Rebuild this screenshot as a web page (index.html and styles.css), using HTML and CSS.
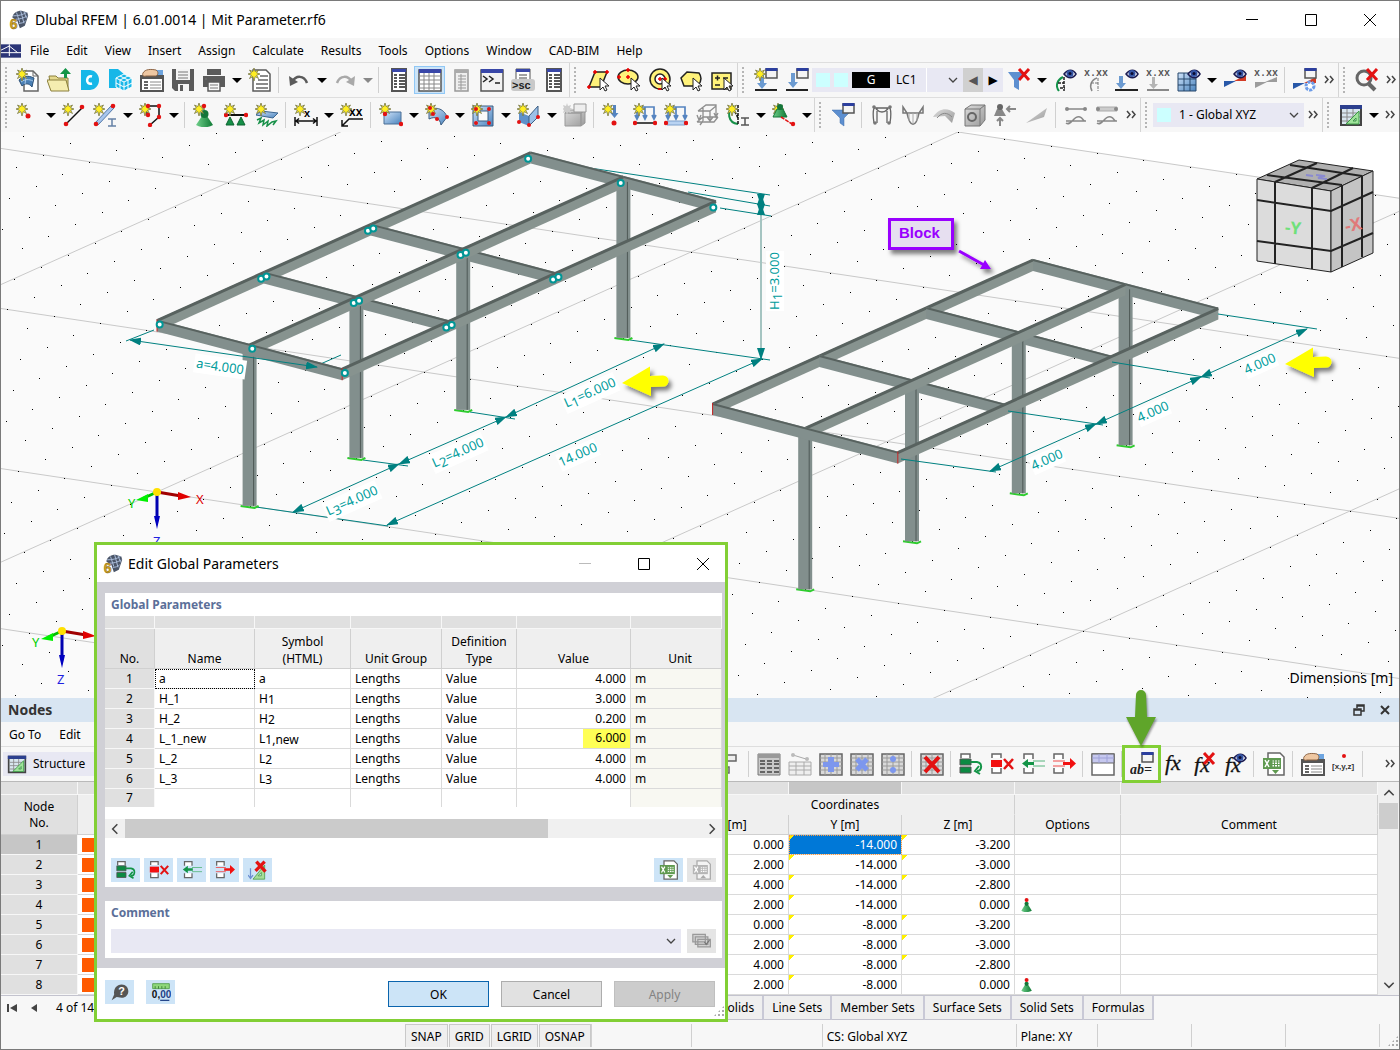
FILE: index.html
```
<!DOCTYPE html>
<html lang="en">
<head>
  <meta charset="UTF-8">
  <meta name="viewport" content="width=device-width, initial-scale=1.0">
  <title>Dlubal RFEM | 6.01.0014 | Mit Parameter.rf6</title>
  <link rel="stylesheet" href="styles.css">
</head>
<body>
  <svg class="gradients" aria-hidden="true">
    <defs>
      <linearGradient id="blue" x1="0" y1="0" x2="1" y2="1"><stop offset="0" stop-color="#cfe3fa"/><stop offset="1" stop-color="#4b84bd"/></linearGradient>
      <linearGradient id="grey" x1="0" y1="0" x2="1" y2="1"><stop offset="0" stop-color="#dcdcdc"/><stop offset="1" stop-color="#9a9a9a"/></linearGradient>
      <linearGradient id="green" x1="0" y1="0" x2="1" y2="0"><stop offset="0" stop-color="#6fcf8a"/><stop offset="1" stop-color="#0f7a35"/></linearGradient>
    </defs>
  </svg>

  <!-- icon set -->
  <svg class="icon-set" aria-hidden="true">
    <symbol id="star" viewBox="0 0 24 24"><path d="M6 0l1.200 3.600L10.500 2 8.600 5 12 6 8.600 7.200 10.500 10.500 7.200 8.600 6 13 4.800 8.600 1.500 10.500 3.400 7.200 0 6l3.400-1L1.500 2l3.300 1.600z" fill="#ffee22" stroke="#77774a" stroke-width=".8"/></symbol>
    <symbol id="win" viewBox="0 0 24 24"><path d="M12 1h11v9H12z" fill="#f4f4f4" stroke="#555" stroke-width="1.500"/><path d="M11.500 0h12v3h-12z" fill="#2c3f9e"/></symbol>
    <symbol id="eye" viewBox="0 0 24 24"><path d="M11 6c4-5 9-5 12 0-3 5-8 5-12 0z" fill="#fff" stroke="#1b1b50" stroke-width="1.500"/><circle cx="17" cy="5.500" r="3.500" fill="#3555a5"/><circle cx="17" cy="5.500" r="1.500" fill="#0b0b30"/></symbol>
    <symbol id="cross" viewBox="0 0 24 24"><path d="M12 1l10 11M22 1L12 12" stroke="#e31212" stroke-width="3"/></symbol>
    <symbol id="cursor" viewBox="0 0 24 24"><path d="M14 10v12l3-3 2 4 2-1-2-4h4z" fill="#fff" stroke="#222"/></symbol>
    <symbol id="cone" viewBox="0 0 24 24"><path d="M9 13h5l6 9c-5 3-12 3-17 0z" fill="url(#green)"/><circle cx="11.500" cy="11" r="4" fill="#14763a"/></symbol>
    <symbol id="xxx" viewBox="0 0 24 24"><text x="0" y="8" font-family="Liberation Mono" font-weight="bold" font-size="10" fill="#555">x.xx</text></symbol>

    <symbol id="i-app" viewBox="0 0 24 24"><path d="M4 9C5 4 9 1 15 1l7 2 1 4-4 12-6 3-3-9z" fill="#4a5568"/><path d="M5 7c6 0 11-1 16-4M8 11c5 0 9-1 14-4M12 16c3 0 6-1 8-3M9 3l4 12M14 1l4 15M18 2l3 8" stroke="#a9bbd8" stroke-width="1.200" fill="none"/><text x="1" y="23" font-family="Liberation Sans" font-weight="bold" font-size="17" fill="#d2a422" stroke="#7a5d10" stroke-width=".5">6</text></symbol>
    <symbol id="i-doc" viewBox="0 0 24 24"><path d="M0 4h24v16H0z" fill="#2b3577"/><path d="M0 14h24M0 11l10-5 10 8M10 4v14" stroke="#fff" stroke-width="1.200" fill="none"/></symbol>
    <symbol id="i-new" viewBox="0 0 24 24"><path d="M8 3h9l5 5v15H8z" fill="#fff" stroke="#666" stroke-width="1.500"/><path d="M17 3v5h5" fill="none" stroke="#666"/><path d="M3 12c4-4 9-5 15-2l-2 9c-3-4-7-4-10-1z" fill="#4b80b5" stroke="#2b5077"/><path d="M5 14c4-3 8-3 12-1M10 9l-1 7" fill="none" stroke="#a9c9e8"/><use href="#star"/></symbol>
    <symbol id="i-open" viewBox="0 0 24 24"><path d="M2 8h7l2 2h10v12H4z" fill="#e5d98e" stroke="#8a7f3c"/><path d="M0 12h19l3 11H4z" fill="#f5edb0" stroke="#8a7f3c"/><path d="M17 10V6h-4l5.500-6L24 6h-4v4z" fill="#139447"/></symbol>
    <symbol id="i-d" viewBox="0 0 24 24"><path d="M3 2h9c12 1 12 19 0 20H3z" fill="#17b7e8"/><path d="M14 8.500c-6-2-7 9 0 7" fill="none" stroke="#fff" stroke-width="2.500"/></symbol>
    <symbol id="i-cloud" viewBox="0 0 24 24"><path d="M0 1h9l7 6-4 13H0z" fill="#17b7e8"/><path d="M15 6l8 4v9l-8 4-8-4v-9z" fill="#17b7e8" stroke="#fff"/><path d="M7 10l8 4 8-4M15 14v9M11 8l8 4v9M19 8l-8 4v9M7 15l8 4 8-4" fill="none" stroke="#fff"/></symbol>
    <symbol id="i-hand" viewBox="0 0 24 24"><path d="M1 8h22v15H1z" fill="#fff" stroke="#555" stroke-width="2"/><path d="M1 7h22v4H1z" fill="#555"/><path d="M14 2h9v5h-9z" fill="#6ea5e0"/><path d="M3 5c2-4 8-4 13-3 3 2 2 5 0 6H6C3 9 2 7 3 5z" fill="#eec7a2" stroke="#8e6545"/><path d="M4 14h4M4 17h4M4 20h4" stroke="#333" stroke-width="1.500"/><path d="M10 14h11M10 17h11M10 20h11" stroke="#888"/></symbol>
    <symbol id="i-save" viewBox="0 0 24 24"><path d="M1 1h22v22H4l-3-3z" fill="#5b5b5b"/><path d="M5 1h14v11H5zM7 16h11v7H7z" fill="#f4f4f4"/><path d="M7 4h10M7 7h10M7 10h10" stroke="#777"/><path d="M9 17h3v6H9z" fill="#5b5b5b"/></symbol>
    <symbol id="i-print" viewBox="0 0 24 24"><path d="M5 1h14v6H5zM1 8h22v11H1z" fill="#5b5b5b"/><path d="M6 14h12v9H6z" fill="#f8f8f8" stroke="#5b5b5b" stroke-width="1.500"/><path d="M8 17h8M8 20h8M3 11h2" stroke="#777"/></symbol>
    <symbol id="i-report" viewBox="0 0 24 24"><path d="M5 2h13l4 4v17H5z" fill="#fff" stroke="#5b5b5b" stroke-width="1.500"/><path d="M12 8h8M10 12h10M8 16h12M8 20h12" stroke="#666" stroke-width="1.500"/><use href="#star"/></symbol>
    <symbol id="i-undo" viewBox="0 0 24 24"><path d="M5 14C9 7 17 7 20 15" fill="none" stroke="#5b5b5b" stroke-width="2.500"/><path d="M2 8l1 10 8-4z" fill="#5b5b5b"/></symbol>
    <symbol id="i-redo" viewBox="0 0 24 24"><path d="M4 15C7 7 15 7 19 14" fill="none" stroke="#a9a9a9" stroke-width="2.500"/><path d="M22 8l-1 10-8-4z" fill="#a9a9a9"/></symbol>
    <symbol id="i-list" viewBox="0 0 24 24"><path d="M5 1h14v22H5z" fill="#fff" stroke="#555" stroke-width="2"/><path d="M5 1h14v3H5z" fill="#3947a8"/><path d="M7 7h3M7 10h3M7 13h3M7 16h3M7 19h3M12 7h6M12 10h6M12 13h6M12 16h6M12 19h6" stroke="#222" stroke-width="1.500"/></symbol>
    <symbol id="i-grid" viewBox="0 0 24 24"><path d="M1 2h22v21H1z" fill="#fff" stroke="#555" stroke-width="1.500"/><path d="M1 1h22v4H1z" fill="#3947a8"/><path d="M1 8h22M1 12h22M1 16h22M1 20h22M6 5v18M11 5v18M16 5v18" stroke="#888"/></symbol>
    <symbol id="i-page" viewBox="0 0 24 24"><path d="M6 2h13v21H6z" fill="#eee" stroke="#999" stroke-width="1.500"/><path d="M6 2h13v3H6z" fill="#aaa"/><path d="M9 8h8M9 11h8M9 14h8M9 17h8M9 20h8M12 6v16" stroke="#999"/></symbol>
    <symbol id="i-console" viewBox="0 0 24 24"><path d="M1 2h22v21H1z" fill="#f2f2f2" stroke="#555" stroke-width="1.500"/><path d="M1 1h22v4H1z" fill="#3947a8"/><path d="M3 8l4 3-4 3M9 8l4 3-4 3M15 15h5" fill="none" stroke="#222" stroke-width="1.500"/></symbol>
    <symbol id="i-sc" viewBox="0 0 24 24"><path d="M5 1h14v18H5z" fill="#fff" stroke="#555"/><path d="M5 1h14v3H5z" fill="#3947a8"/><path d="M8 7h8M8 10h8" stroke="#444"/><rect x="0" y="11" width="24" height="12" rx="3" fill="#c9c9c9"/><text x="1" y="21" font-family="Liberation Sans" font-weight="bold" font-size="11" fill="#222">&gt;sc</text></symbol>
    <symbol id="i-area1" viewBox="0 0 24 24"><path d="M9 4h12l-6 15H3z" fill="#fff27a" stroke="#222" stroke-width="1.500"/><path d="M7 4h4M9 2v4M19 4h4M21 2v4M1 19h4M3 17v4" stroke="#e00" stroke-width="1.500"/><use href="#cursor"/></symbol>
    <symbol id="i-area2" viewBox="0 0 24 24"><ellipse cx="11" cy="9" rx="10" ry="7" fill="#fff27a" stroke="#222" stroke-width="1.500"/><path d="M9 2h4M11 0v4M0 9h4M2 7v4M9 9h4M11 7v4" stroke="#e00" stroke-width="1.500"/><use href="#cursor"/></symbol>
    <symbol id="i-area3" viewBox="0 0 24 24"><circle cx="12" cy="11" r="10" fill="#fff27a" stroke="#222" stroke-width="1.500"/><circle cx="12" cy="11" r="5" fill="#fff" stroke="#222" stroke-width="1.500"/><path d="M10 11h4M12 9v4M15 11h4M17 9v4M10 21h4" stroke="#e00" stroke-width="1.500"/><use href="#cursor"/></symbol>
    <symbol id="i-area4" viewBox="0 0 24 24"><path d="M2 10l6-6 12 1c3 4 2 9-1 13L5 18z" fill="#fff27a" stroke="#222" stroke-width="1.500"/><use href="#cursor"/></symbol>
    <symbol id="i-area5" viewBox="0 0 24 24"><path d="M2 5h19v16H2z" fill="#fff27a" stroke="#222" stroke-width="1.500"/><path d="M5 10h5M7.500 7.500v5M5 17h5M13 10h5" stroke="#222" stroke-width="1.500"/><use href="#cursor"/></symbol>
    <symbol id="i-loadnew" viewBox="0 0 24 24"><use href="#win"/><path d="M6 7h4v8h3l-5 6-5-6h3z" fill="#6b9ad0"/><path d="M1 22h22" stroke="#222" stroke-width="2"/><use href="#star"/></symbol>
    <symbol id="i-load" viewBox="0 0 24 24"><use href="#win"/><path d="M6 5h4v9h3l-5 6-5-6h3z" fill="#6b9ad0"/><path d="M1 22h22" stroke="#222" stroke-width="2"/></symbol>
    <symbol id="i-nofilter" viewBox="0 0 24 24"><path d="M1 4h18l-7 8v10l-5-3v-7z" fill="#5d8fd0"/><use href="#cross"/></symbol>
    <symbol id="i-filter" viewBox="0 0 24 24"><path d="M1 7h20l-8 8v8l-4-3v-5z" fill="#5d8fd0" stroke="#3d6cab" stroke-width=".5"/><use href="#win"/></symbol>
    <symbol id="i-vmodel" viewBox="0 0 24 24"><path d="M6 23C2 18 4 12 10 9" fill="none" stroke="#14934a" stroke-width="2"/><path d="M11 9v14M5 15h6M7 20h5" stroke="#222" stroke-dasharray="3 1" stroke-width="1.500"/><use href="#eye"/></symbol>
    <symbol id="i-vval" viewBox="0 0 24 24"><path d="M8 23c-3-5-1-11 5-13" fill="none" stroke="#888" stroke-width="1.500"/><path d="M14 10v13M7 15h7" stroke="#777" stroke-dasharray="3 1"/><use href="#xxx"/></symbol>
    <symbol id="i-vload" viewBox="0 0 24 24"><path d="M4 8h4v7h3l-5 6-5-6h3z" fill="#6b9ad0"/><path d="M0 22h23" stroke="#222" stroke-width="2"/><use href="#eye"/></symbol>
    <symbol id="i-vloadx" viewBox="0 0 24 24"><path d="M6 9h3v7h3l-4.500 5L3 16h3z" fill="#b5b5b5"/><path d="M1 22h22" stroke="#888" stroke-width="2"/><use href="#xxx"/></symbol>
    <symbol id="i-vgrid" viewBox="0 0 24 24"><path d="M1 5h18v18H1z" fill="url(#blue)" stroke="#27476b"/><path d="M7 5v18M13 5v18M1 11h18M1 17h18" stroke="#27476b"/><use href="#eye"/></symbol>
    <symbol id="i-vres" viewBox="0 0 24 24"><path d="M1 13h12L1 19z" fill="#2858a8"/><path d="M11 13l12-6v6z" fill="#d33b24"/><use href="#eye"/></symbol>
    <symbol id="i-vresx" viewBox="0 0 24 24"><path d="M1 14h12L1 20zM11 14l12-5v5z" fill="#9c9c9c"/><use href="#xxx"/></symbol>
    <symbol id="i-vset" viewBox="0 0 24 24"><path d="M0 15h12L0 21z" fill="#2858a8"/><path d="M11 15l12-6v6z" fill="#d33b24"/><use href="#win"/><circle cx="17" cy="18" r="4" fill="#fff" stroke="#6b9be8" stroke-width="3" stroke-dasharray="3 1"/></symbol>
    <symbol id="i-find" viewBox="0 0 24 24"><circle cx="9" cy="10" r="7" fill="none" stroke="#666" stroke-width="3"/><path d="M14 16l6 6" stroke="#666" stroke-width="4"/><use href="#cross"/></symbol>

    <symbol id="i-node" viewBox="0 0 24 24"><use href="#star"/><circle cx="12" cy="13" r="2.500" fill="#e31212"/></symbol>
    <symbol id="i-line" viewBox="0 0 24 24"><path d="M5 20L21 4" stroke="#111" stroke-width="1.500"/><circle cx="4" cy="21" r="2.300" fill="#e31212"/><circle cx="20" cy="4" r="2.300" fill="#e31212"/><use href="#star"/></symbol>
    <symbol id="i-member" viewBox="0 0 24 24"><path d="M2 20L18 3l3 2L5 22z" fill="#a8c6ee" stroke="#5479a8"/><circle cx="3" cy="21" r="2.300" fill="#e31212"/><circle cx="20" cy="3" r="2.300" fill="#e31212"/><path d="M15 16h8M15 23h8M19 16v7" stroke="#6581a6" stroke-width="1.500"/><use href="#star"/></symbol>
    <symbol id="i-poly" viewBox="0 0 24 24"><path d="M8 3h12v11l-9 8M8 3v9" stroke="#111" stroke-width="1.500" fill="none"/><use href="#star"/><circle cx="9" cy="3" r="2.200" fill="#e31212"/><circle cx="20" cy="3" r="2.200" fill="#e31212"/><circle cx="9" cy="12" r="2.200" fill="#e31212"/><circle cx="20" cy="14" r="2.200" fill="#e31212"/><circle cx="11" cy="22" r="2.200" fill="#e31212"/></symbol>
    <symbol id="i-support" viewBox="0 0 24 24"><use href="#cone"/><use href="#star"/><circle cx="11" cy="3" r="2.200" fill="#e31212"/></symbol>
    <symbol id="i-lsupport" viewBox="0 0 24 24"><path d="M3 12h18" stroke="#111" stroke-width="2"/><path d="M2 22l4-8 4 8zM13 22l4-8 4 8z" fill="#169048" stroke="#0d6430"/><circle cx="2" cy="12" r="2.200" fill="#e31212"/><circle cx="22" cy="12" r="2.200" fill="#e31212"/><use href="#star"/></symbol>
    <symbol id="i-ssupport" viewBox="0 0 24 24"><path d="M1 12l5-4 17 2-5 5z" fill="url(#blue)" stroke="#3b6690"/><path d="M2 17l4-2-2 5 5-3-1 5 5-4-1 5 5-4 4-1-3 4" fill="none" stroke="#169048" stroke-width="1.500"/><use href="#star"/></symbol>
    <symbol id="i-dim" viewBox="0 0 24 24"><path d="M1 14v9M23 14v9M2 18h20M5 15.500L2 18l3 2.500M19 15.500l3 2.500-3 2.500" fill="none" stroke="#111" stroke-width="1.500"/><text x="10" y="14" font-family="Liberation Sans" font-weight="bold" font-size="11">x</text><use href="#star"/></symbol>
    <symbol id="i-dim2" viewBox="0 0 24 24"><path d="M23 16H9l-7 7M2 17v6h6" fill="none" stroke="#111" stroke-width="1.500"/><text x="9" y="13" font-family="Liberation Sans" font-weight="bold" font-size="12">xx</text><use href="#star"/></symbol>
    <symbol id="i-surf" viewBox="0 0 24 24"><path d="M5 9h17v12H5z" fill="url(#blue)" stroke="#4a6f96"/><use href="#star"/><circle cx="6" cy="11" r="2.200" fill="#e31212"/><circle cx="22" cy="21" r="2.200" fill="#e31212"/></symbol>
    <symbol id="i-curved" viewBox="0 0 24 24"><path d="M4 8c7-6 16-1 18 6l-6 8c-1-7-6-9-12-6z" fill="url(#blue)" stroke="#3b5d82"/><use href="#star"/><circle cx="5" cy="5" r="2" fill="#e31212"/><circle cx="22" cy="14" r="2" fill="#e31212"/><circle cx="12" cy="16" r="2" fill="#e31212"/><circle cx="8" cy="11" r="2" fill="#e31212"/></symbol>
    <symbol id="i-opening" viewBox="0 0 24 24"><path d="M2 3h20v20H2z" fill="url(#blue)" stroke="#3b5d82"/><path d="M7 8h10v10H7z" fill="#fafafa" stroke="#3b5d82"/><use href="#star"/><circle cx="5" cy="6" r="2" fill="#e31212"/><circle cx="18" cy="6" r="2" fill="#e31212"/><circle cx="5" cy="20" r="2" fill="#e31212"/><circle cx="18" cy="20" r="2" fill="#e31212"/></symbol>
    <symbol id="i-solid" viewBox="0 0 24 24"><path d="M2 9l10 4v10L2 19z" fill="#5f91ca"/><path d="M12 13l9-10v11l-9 9z" fill="#9cc0e8" stroke="#3b5d82"/><use href="#star"/><circle cx="2" cy="19" r="2" fill="#e31212"/><circle cx="12" cy="22" r="2" fill="#e31212"/><circle cx="21" cy="14" r="2" fill="#e31212"/></symbol>
    <symbol id="i-box" viewBox="0 0 24 24"><path d="M2 10l4-3h16l-4 3zM2 10h16v13H2zM18 10l4-3v13l-4 3z" fill="url(#grey)" stroke="#999"/><path d="M11 1h12v8H11z" fill="#eee" stroke="#999"/><path d="M4 0l1 3 3-1-1 3 3 1-3 1 1 3-3-1-1 3-1-3-3 1 1-3-2-1 2-1-1-3 3 1z" fill="#ccc"/></symbol>
    <symbol id="i-nload" viewBox="0 0 24 24"><path d="M11 2h3v8h2.500l-4 5-4-5H11z" fill="#5584c0"/><circle cx="12" cy="20" r="2.500" fill="#e31212"/><use href="#star"/></symbol>
    <symbol id="i-mload" viewBox="0 0 24 24"><path d="M4 7V4h17v11M12 4v11M4 7v8M2 12l2 4 2-4M10 12l2 4 2-4M19 12l2 4 2-4" fill="none" stroke="#5584c0" stroke-width="1.700"/><path d="M3 20h18" stroke="#111" stroke-width="1.500"/><circle cx="2" cy="20" r="2.200" fill="#e31212"/><circle cx="22" cy="20" r="2.200" fill="#e31212"/><use href="#star"/></symbol>
    <symbol id="i-sload" viewBox="0 0 24 24"><path d="M4 7V4h17v11M12 4v11M4 7v8M2 12l2 4 2-4M10 12l2 4 2-4M19 12l2 4 2-4" fill="none" stroke="#5584c0" stroke-width="1.700"/><path d="M3 18h18v4H3z" fill="#b9d3f2" stroke="#7ca0cc"/><circle cx="2" cy="20" r="2.200" fill="#e31212"/><circle cx="22" cy="20" r="2.200" fill="#e31212"/><use href="#star"/></symbol>
    <symbol id="i-gload" viewBox="0 0 24 24"><path d="M3 8l8-6h10v10M3 8h12v10M8 4v14M21 3l-6 5M2 19h17l4-5M2 12l2 5 2-5M12 14l3 4 3-4M19 10l2 4 2-4M8 18l-3 4M2 19l6-5h15" fill="none" stroke="#8e8e8e" stroke-width="1.300"/></symbol>
    <symbol id="i-imp" viewBox="0 0 24 24"><path d="M8 3C0 8 2 20 12 21" fill="none" stroke="#169048" stroke-width="2"/><path d="M12 2v20M7 5l5 10" stroke="#111" stroke-width="1.500" stroke-dasharray="3 1"/><path d="M15 15h8M15 22h8M19 15v7" stroke="#555" stroke-width="1.500"/><use href="#star"/></symbol>
    <symbol id="i-displ" viewBox="0 0 24 24"><use href="#star"/><path d="M5 6h6l4 8H1z" fill="url(#green)" stroke="#14763a"/><circle cx="8" cy="4" r="3" fill="#14763a"/><path d="M9 14l11 7" stroke="#e31212" stroke-width="1.500" stroke-dasharray="4 1"/><circle cx="21" cy="21" r="2.200" fill="#e31212"/></symbol>
    <symbol id="i-r1" viewBox="0 0 24 24"><path d="M4 20C3 14 3 8 4 5h16c1 3 1 9 0 15M6 6c4 4 8 4 12 0M7 5v15M17 5v15" fill="none" stroke="#666" stroke-width="1.300"/><circle cx="4" cy="4" r="1.800" fill="#777"/><circle cx="20" cy="4" r="1.800" fill="#777"/><circle cx="5" cy="20" r="1.800" fill="#777"/><circle cx="19" cy="20" r="1.800" fill="#777"/></symbol>
    <symbol id="i-r2" viewBox="0 0 24 24"><path d="M2 4l4 6c3 15 9 15 12 0l4-6v6H2z" fill="none" stroke="#777" stroke-width="1.500"/><path d="M8 10v8M12 10v11M16 10v8" stroke="#aaa"/></symbol>
    <symbol id="i-r3" viewBox="0 0 24 24"><path d="M1 14C8 4 16 5 23 10l-3 10-7-7z" fill="url(#grey)"/><path d="M5 15c5-6 10-6 15-1" fill="none" stroke="#888"/></symbol>
    <symbol id="i-r4" viewBox="0 0 24 24"><path d="M2 6l6-4h14v15l-5 6H2z" fill="url(#grey)" stroke="#777"/><path d="M2 6h15v17M17 6l5-4" fill="none" stroke="#777"/><circle cx="9" cy="14" r="4" fill="none" stroke="#666" stroke-width="2"/></symbol>
    <symbol id="i-r5" viewBox="0 0 24 24"><path d="M3 6h5l4 7H0z" fill="#888"/><circle cx="6" cy="4" r="3" fill="#666"/><path d="M6 15v8M3 18l3-3 3 3M13 6h9M16 3l-3 3 3 3" fill="none" stroke="#888" stroke-width="2"/></symbol>
    <symbol id="i-r6" viewBox="0 0 24 24"><path d="M1 20L22 5l-3 9z" fill="url(#grey)"/></symbol>
    <symbol id="i-r7" viewBox="0 0 24 24"><path d="M2 6h20M2 18h20M2 20c5 4 8-9 14-6 3 1 3 4 5 4" fill="none" stroke="#888" stroke-width="1.500"/><circle cx="3" cy="6" r="2" fill="#888"/><circle cx="21" cy="6" r="2" fill="#888"/></symbol>
    <symbol id="i-r8" viewBox="0 0 24 24"><path d="M2 4h20v4H2z" fill="#ccc" stroke="#aaa"/><path d="M2 18h20M2 20c5 4 8-9 14-6 3 1 3 4 5 4" fill="none" stroke="#888" stroke-width="1.500"/><circle cx="3" cy="6" r="2" fill="#888"/><circle cx="21" cy="6" r="2" fill="#888"/></symbol>
    <symbol id="i-table" viewBox="0 0 24 24"><path d="M2 3h20v19H2z" fill="#d9e6ee" stroke="#444" stroke-width="2"/><path d="M1 2h22v4H1z" fill="#2c3f8e"/><path d="M3 10h18M3 14h18M3 18h18M8 6v15M14 6v15" stroke="#888"/><path d="M20 8v13H7zM17 15v3h-3z" fill="#9fe39a" stroke="#3c9a46" fill-rule="evenodd"/></symbol>
    <symbol id="i-more" viewBox="0 0 12 12"><path d="M2 2l3 3.500L2 9M7 2l3 3.500L7 9" fill="none" stroke="#444" stroke-width="1.500"/></symbol>

    <symbol id="i-rows" viewBox="0 0 24 24"><path d="M1 2h22v21H1z" fill="#c9c9c9" stroke="#777"/><path d="M1 4h22" stroke="#999" stroke-width="4"/><path d="M3 9h5M10 9h5M17 9h5M3 12h5M10 12h5M17 12h5M3 16h5M10 16h5M17 16h5M3 20h5M10 20h5M17 20h5" stroke="#444" stroke-width="1.500"/></symbol>
    <symbol id="i-rows2" viewBox="0 0 24 24"><path d="M1 10h22v13H1z" fill="#eee" stroke="#aaa"/><path d="M1 14h22M1 18h22M8 10v13M16 10v13M5 3l13 4" stroke="#aaa"/><circle cx="5" cy="3" r="2" fill="#bbb"/><circle cx="19" cy="7" r="2" fill="#bbb"/></symbol>
    <symbol id="cells" viewBox="0 0 24 24"><path d="M1 2h22v21H1z" fill="#d9d9d9" stroke="#666" stroke-width="1.500"/><path d="M1 6h22M1 10h22M1 14h22M1 18h22M6 2v21M12 2v21M18 2v21" stroke="#999"/></symbol>
    <symbol id="i-plus" viewBox="0 0 24 24"><use href="#cells"/><path d="M9 5h6v5h5v5h-5v5H9v-5H4v-5h5z" fill="#7d97ee"/></symbol>
    <symbol id="i-times" viewBox="0 0 24 24"><use href="#cells"/><path d="M7 7l10 11M17 7L7 18" stroke="#7d97ee" stroke-width="5"/></symbol>
    <symbol id="i-divide" viewBox="0 0 24 24"><use href="#cells"/><circle cx="12" cy="7" r="3" fill="#7d97ee"/><circle cx="12" cy="18" r="3" fill="#7d97ee"/></symbol>
    <symbol id="i-clear" viewBox="0 0 24 24"><use href="#cells"/><path d="M5 5l14 15M19 5L5 20" stroke="#e31212" stroke-width="4"/></symbol>
    <symbol id="i-ins" viewBox="0 0 24 24"><path d="M2 6V2h9v4" fill="#fff" stroke="#666" stroke-width="1.500"/><path d="M1 7h11v6H1zM1 15h11v6H1z" fill="#0c8a43" stroke="#555"/><path d="M12 10h6c6 1 5 9 0 9M20 14l-4 5 5 3" fill="none" stroke="#139447" stroke-width="2"/></symbol>
    <symbol id="i-del" viewBox="0 0 24 24"><path d="M2 6V2h9v4M2 16v5h9v-5" fill="#fff" stroke="#666" stroke-width="1.500"/><path d="M1 8h11v7H1z" fill="#f21010"/><path d="M14 7l9 10M23 7l-9 10" stroke="#e31212" stroke-width="2.500"/></symbol>
    <symbol id="i-left" viewBox="0 0 24 24"><path d="M3 7V2h9v5M3 16v5h9v-5" fill="#fff" stroke="#666" stroke-width="1.500"/><path d="M24 9H12M24 14H12" stroke="#56b47c"/><path d="M13 10H7V7l-6 4.500L7 16v-3h6z" fill="#139447"/></symbol>
    <symbol id="i-right" viewBox="0 0 24 24"><path d="M2 7V2h9v5M2 16v5h9v-5" fill="#fff" stroke="#666" stroke-width="1.500"/><path d="M1 9h12M1 14h12" stroke="#f04848"/><path d="M11 10h7V6l6 5.500-6 5.500v-4h-7z" fill="#f21010"/></symbol>
    <symbol id="i-sortx" viewBox="0 0 24 24"><path d="M3 10v11M0 18l3 4 3-4" fill="none" stroke="#6b8ed0" stroke-width="1.500"/><path d="M20 6v17H6zM16 15v4h-4z" fill="#a6dd98" stroke="#4ea04c" fill-rule="evenodd"/><path d="M10 2l11 12M20 2L9 13" stroke="#e31212" stroke-width="4"/></symbol>
    <symbol id="i-xls" viewBox="0 0 24 24"><path d="M6 1h12l4 4v18H6z" fill="#fff" stroke="#666" stroke-width="1.500"/><path d="M1 6h18v11H1z" fill="#5f9a50"/><path d="M10 8h8v7h-8zM10 10h8M10 12.500h8M12.500 8v7M15.500 8v7" fill="#fff" stroke="#5f9a50"/><path d="M3 8l4 7M7 8l-4 7" stroke="#fff" stroke-width="1.500"/><path d="M10 18h7l-3.500 4z" fill="#5f9a50"/></symbol>
    <symbol id="i-xls2" viewBox="0 0 24 24"><path d="M6 1h12l4 4v18H6z" fill="#f4f4f4" stroke="#aaa" stroke-width="1.500"/><path d="M1 6h18v11H1z" fill="#b5b5b5"/><path d="M10 8h8v7h-8zM10 10h8M10 12.500h8M12.500 8v7M15.500 8v7" fill="#fff" stroke="#b5b5b5"/><path d="M3 8l4 7M7 8l-4 7" stroke="#fff" stroke-width="1.500"/><path d="M10 22h7l-3.500-4z" fill="#aaa"/></symbol>
    <symbol id="i-split" viewBox="0 0 24 24"><path d="M1 2h22v21H1z" fill="#fff" stroke="#666" stroke-width="1.500"/><path d="M1 2h22v9H1z" fill="#c6c8ef" stroke="#666"/><path d="M8 2v9M16 2v9M1 6h22" stroke="#9fa2d8"/></symbol>
    <symbol id="i-ab" viewBox="0 0 24 24"><use href="#win"/><text x="0" y="22" font-family="Liberation Serif" font-style="italic" font-weight="bold" font-size="14" fill="#222">ab=</text></symbol>
    <symbol id="i-fx" viewBox="0 0 24 24"><text x="4" y="18" font-family="Liberation Serif" font-style="italic" font-size="22" fill="#111" stroke="#111" stroke-width=".3">fx</text></symbol>
    <symbol id="i-fxx" viewBox="0 0 24 24"><text x="2" y="20" font-family="Liberation Serif" font-style="italic" font-size="22" fill="#111" stroke="#111" stroke-width=".3">fx</text><use href="#cross"/></symbol>
    <symbol id="i-fxe" viewBox="0 0 24 24"><text x="2" y="20" font-family="Liberation Serif" font-style="italic" font-size="22" fill="#111" stroke="#111" stroke-width=".3">fx</text><use href="#eye"/></symbol>
    <symbol id="i-xyz" viewBox="0 0 24 24"><circle cx="12" cy="4" r="2" fill="#e31212"/><text x="0" y="17" font-family="Liberation Sans" font-weight="bold" font-size="8" fill="#333">[x,y,z]</text></symbol>
    <symbol id="i-help" viewBox="0 0 24 24"><path d="M2 22l3-7C4 8 8 3 14 3c5 0 8 4 8 8s-3 8-8 8l-6-1z" fill="#555"/><text x="10" y="16" font-family="Liberation Sans" font-weight="bold" font-size="13" fill="#fff">?</text></symbol>
    <symbol id="i-units" viewBox="0 0 24 24"><path d="M2 2h20v6H2z" fill="#8fd87c" stroke="#4f9a48"/><path d="M5 8V5M9 8V5M13 8V5M17 8V5" stroke="#33762e"/><text x="1" y="19" font-family="Liberation Sans" font-weight="bold" font-size="12" fill="#111">0,<tspan fill="#1e3f86">00</tspan></text><path d="M11 22h11" stroke="#1e3f86" stroke-width="1.500"/></symbol>
    <symbol id="i-stack" viewBox="0 0 24 24"><path d="M1 4h15v9H1zM4 7h15v9H4zM7 10h15v9H7z" fill="#d2d2d2" stroke="#999" stroke-width="1.500"/><path d="M15 13l2 3 4-5" fill="none" stroke="#777" stroke-width="1.500"/></symbol>
    <symbol id="i-chev" viewBox="0 0 12 12"><path d="M2 4l4 4 4-4" fill="none" stroke="#444" stroke-width="1.300"/></symbol>
    <symbol id="i-pin" viewBox="0 0 12 12"><path d="M5 6h3l3 5c-3 1.500-7 1.500-9 0z" fill="url(#green)"/><circle cx="6.500" cy="5" r="1.800" fill="#14763a"/><circle cx="6.500" cy="1.800" r="1.700" fill="#e31212"/></symbol>
  </svg>

  <div class="app">
    <header class="titlebar">
      <svg class="logo"><use href="#i-app"/></svg>
      <h1>Dlubal RFEM | 6.01.0014 | Mit Parameter.rf6</h1>
      <div class="window-buttons">
        <button aria-label="Minimize"><svg viewBox="0 0 12 12"><path d="M0 5.500h12"/></svg></button>
        <button aria-label="Maximize"><svg viewBox="0 0 12 12"><path d="M.5.500h11v11H.5z"/></svg></button>
        <button aria-label="Close"><svg viewBox="0 0 12 12"><path d="M0 0l12 12M12 0L0 12"/></svg></button>
      </div>
    </header>

    <nav class="menubar">
      <svg class="doc-icon"><use href="#i-doc"/></svg>
      <button>File</button><button>Edit</button><button>View</button><button>Insert</button><button>Assign</button><button>Calculate</button><button>Results</button><button>Tools</button><button>Options</button><button>Window</button><button>CAD-BIM</button><button>Help</button>
    </nav>

    <div class="toolbar">
      <div class="group">
        <i class="grip"></i>
        <button class="tool" aria-label="New"><svg><use href="#i-new"/></svg></button>
        <button class="tool" aria-label="Open"><svg><use href="#i-open"/></svg></button>
        <button class="tool" aria-label="Dlubal Center"><svg><use href="#i-d"/></svg></button>
        <button class="tool" aria-label="Blocks"><svg><use href="#i-cloud"/></svg></button>
        <button class="tool" aria-label="Base data"><svg><use href="#i-hand"/></svg></button>
        <button class="tool" aria-label="Save"><svg><use href="#i-save"/></svg></button>
        <button class="tool" aria-label="Print"><svg><use href="#i-print"/></svg></button>
        <button class="caret" aria-label="Print options"></button>
        <button class="tool" aria-label="Report"><svg><use href="#i-report"/></svg></button>
        <i class="sep"></i>
        <button class="tool" aria-label="Undo"><svg><use href="#i-undo"/></svg></button>
        <button class="caret" aria-label="Undo list"></button>
        <button class="tool" aria-label="Redo"><svg><use href="#i-redo"/></svg></button>
        <button class="caret caret--off" aria-label="Redo list"></button>
        <i class="sep"></i>
        <button class="tool" aria-label="Navigator"><svg><use href="#i-list"/></svg></button>
        <button class="tool tool--active" aria-label="Tables"><svg><use href="#i-grid"/></svg></button>
        <button class="tool" aria-label="Report view"><svg><use href="#i-page"/></svg></button>
        <button class="tool" aria-label="Console"><svg><use href="#i-console"/></svg></button>
        <button class="tool" aria-label="Script"><svg><use href="#i-sc"/></svg></button>
        <button class="tool" aria-label="Panel"><svg><use href="#i-list"/></svg></button>
      </div>
      <div class="group">
        <i class="grip"></i>
        <button class="tool" aria-label="Select by parallelogram"><svg><use href="#i-area1"/></svg></button>
        <button class="tool" aria-label="Select by ellipse"><svg><use href="#i-area2"/></svg></button>
        <button class="tool" aria-label="Select by annulus"><svg><use href="#i-area3"/></svg></button>
        <button class="tool" aria-label="Select by boundary"><svg><use href="#i-area4"/></svg></button>
        <button class="tool" aria-label="Special selection"><svg><use href="#i-area5"/></svg></button>
      </div>
      <div class="group">
        <i class="grip"></i>
        <button class="tool" aria-label="New load case"><svg><use href="#i-loadnew"/></svg></button>
        <button class="tool" aria-label="Load cases"><svg><use href="#i-load"/></svg></button>
        <div class="combo">
          <i class="swatch"></i><i class="swatch"></i><b class="badge">G</b>
          <select class="combo__lc" aria-label="Load case"><option>LC1</option></select>
          <svg class="chev"><use href="#i-chev"/></svg>
        </div>
        <button class="step step--off" aria-label="Previous load case">&#9664;&#xFE0E;</button>
        <button class="step" aria-label="Next load case">&#9654;&#xFE0E;</button>
        <button class="tool" aria-label="Remove filter"><svg><use href="#i-nofilter"/></svg></button>
        <button class="caret" aria-label="Filter list"></button>
        <button class="tool" aria-label="Show imperfections"><svg><use href="#i-vmodel"/></svg></button>
        <button class="tool" aria-label="Imperfection values"><svg><use href="#i-vval"/></svg></button>
        <button class="tool" aria-label="Show loads"><svg><use href="#i-vload"/></svg></button>
        <button class="tool" aria-label="Load values"><svg><use href="#i-vloadx"/></svg></button>
        <button class="tool" aria-label="Show mesh"><svg><use href="#i-vgrid"/></svg></button>
        <button class="caret" aria-label="Mesh options"></button>
        <button class="tool" aria-label="Show results"><svg><use href="#i-vres"/></svg></button>
        <button class="tool" aria-label="Result values"><svg><use href="#i-vresx"/></svg></button>
        <i class="sep"></i>
        <button class="tool" aria-label="Result settings"><svg><use href="#i-vset"/></svg></button>
        <button class="more" aria-label="More"><svg><use href="#i-more"/></svg></button>
      </div>
      <div class="group">
        <i class="grip"></i>
        <button class="tool" aria-label="Clear search"><svg><use href="#i-find"/></svg></button>
        <button class="more" aria-label="More"><svg><use href="#i-more"/></svg></button>
      </div>
    </div>

    <div class="toolbar">
      <div class="group">
        <i class="grip"></i>
        <button class="tool" aria-label="Node"><svg><use href="#i-node"/></svg></button>
        <button class="caret" aria-label="Node types"></button>
        <button class="tool" aria-label="Line"><svg><use href="#i-line"/></svg></button>
        <button class="tool" aria-label="Member"><svg><use href="#i-member"/></svg></button>
        <button class="caret" aria-label="Member types"></button>
        <button class="tool" aria-label="Polyline"><svg><use href="#i-poly"/></svg></button>
        <button class="caret" aria-label="Line types"></button>
        <i class="sep"></i>
        <button class="tool" aria-label="Nodal support"><svg><use href="#i-support"/></svg></button>
        <button class="tool" aria-label="Line support"><svg><use href="#i-lsupport"/></svg></button>
        <button class="tool" aria-label="Surface support"><svg><use href="#i-ssupport"/></svg></button>
        <i class="sep"></i>
        <button class="tool" aria-label="Dimension"><svg><use href="#i-dim"/></svg></button>
        <button class="caret" aria-label="Dimension types"></button>
        <button class="tool" aria-label="Note"><svg><use href="#i-dim2"/></svg></button>
        <i class="sep"></i>
        <button class="tool" aria-label="Surface"><svg><use href="#i-surf"/></svg></button>
        <button class="caret" aria-label="Surface types"></button>
        <button class="tool" aria-label="Curved surface"><svg><use href="#i-curved"/></svg></button>
        <button class="caret" aria-label="Curved types"></button>
        <button class="tool" aria-label="Opening"><svg><use href="#i-opening"/></svg></button>
        <button class="caret" aria-label="Opening types"></button>
        <button class="tool" aria-label="Solid"><svg><use href="#i-solid"/></svg></button>
        <button class="caret" aria-label="Solid types"></button>
        <button class="tool" aria-label="Block"><svg><use href="#i-box"/></svg></button>
        <i class="sep"></i>
        <button class="tool" aria-label="Nodal load"><svg><use href="#i-nload"/></svg></button>
        <button class="tool" aria-label="Member load"><svg><use href="#i-mload"/></svg></button>
        <button class="tool" aria-label="Surface load"><svg><use href="#i-sload"/></svg></button>
        <button class="tool" aria-label="Free load"><svg><use href="#i-gload"/></svg></button>
        <button class="tool" aria-label="Imperfection"><svg><use href="#i-imp"/></svg></button>
        <button class="caret" aria-label="Imperfection types"></button>
        <button class="tool" aria-label="Imposed displacement"><svg><use href="#i-displ"/></svg></button>
        <button class="caret" aria-label="Displacement types"></button>
      </div>
      <div class="group">
        <i class="grip"></i>
        <button class="tool" aria-label="Filter"><svg><use href="#i-filter"/></svg></button>
        <i class="sep"></i>
        <button class="tool" aria-label="Deformation"><svg><use href="#i-r1"/></svg></button>
        <button class="tool" aria-label="Members results"><svg><use href="#i-r2"/></svg></button>
        <button class="tool" aria-label="Surfaces results"><svg><use href="#i-r3"/></svg></button>
        <button class="tool" aria-label="Solids results"><svg><use href="#i-r4"/></svg></button>
        <button class="tool" aria-label="Reactions"><svg><use href="#i-r5"/></svg></button>
        <button class="tool" aria-label="Distribution"><svg><use href="#i-r6"/></svg></button>
        <i class="sep"></i>
        <button class="tool" aria-label="Result diagram"><svg><use href="#i-r7"/></svg></button>
        <button class="tool" aria-label="Result section"><svg><use href="#i-r8"/></svg></button>
        <button class="more" aria-label="More"><svg><use href="#i-more"/></svg></button>
      </div>
      <div class="group">
        <i class="grip"></i>
        <div class="combo">
          <i class="swatch"></i>
          <select class="combo__cs" aria-label="Coordinate system"><option>1 - Global XYZ</option></select>
          <svg class="chev"><use href="#i-chev"/></svg>
        </div>
        <button class="more" aria-label="More"><svg><use href="#i-more"/></svg></button>
      </div>
      <div class="group">
        <i class="grip"></i>
        <button class="tool" aria-label="Table settings"><svg><use href="#i-table"/></svg></button>
        <button class="caret" aria-label="Table list"></button>
        <button class="more" aria-label="More"><svg><use href="#i-more"/></svg></button>
      </div>
    </div>

    <main class="view">
      <svg class="scene" viewBox="1 132 1398 566" preserveAspectRatio="xMidYMid slice">
        <defs>
          <marker id="arrow" viewBox="0 0 12 8" refX="11" refY="4" markerWidth="12" markerHeight="8" markerUnits="userSpaceOnUse" orient="auto-start-reverse"><path d="M0 0l12 4-12 4z" fill="#008080"/></marker>
          <filter id="shadow" x="-30%" y="-30%" width="180%" height="200%"><feDropShadow dx="3" dy="4" stdDeviation="2" flood-color="#000" flood-opacity=".5"/></filter>
          <path id="pointer" d="M0 0l28-16.500v9.500l13-.5a5.500 5.500 0 0 1 0 11l-12 .5v9z" fill="#ffff00"/>
        </defs>
        <path d="M958 132H1400V198z" fill="#fff"/>
        <g id="ground"></g>
        <g class="dim-lines">
          <path d="M590 168l180 27M688 192l82 14M720 208l51 8M630 340l140 20M470 412l45 7M363 460l45 6M256 507l132 19M154 330l-28 11M341 355l-32 14"/>
        </g>
        <g id="frames"></g>
        <g class="dim-lines">
          <path d="M1218 314l99 15M1112 362l98 16M1008 411l95 14M901 459l95 13"/>
          <path class="dim-arrow" d="M130 340L317 367"/>
          <path class="dim-arrow" d="M506 417L664 344"/>
          <path class="dim-arrow" d="M399 464L506 417"/>
          <path class="dim-arrow" d="M293 512L399 464"/>
          <path class="dim-arrow" d="M387 525L762 359"/>
          <path class="dim-arrow" d="M990 471L1096 424"/>
          <path class="dim-arrow" d="M1096 424L1201 377"/>
          <path class="dim-arrow" d="M1201 377L1307 329"/>
          <path class="dim-pale" d="M761 214V350"/>
          <path class="dim-arrow" d="M761 194V205"/>
          <path class="dim-arrow" d="M761 204V215"/>
          <path class="dim-down" d="M761 350V359"/>
        </g>
        <g id="nodes"></g>
        <g class="dim-text">
          <g transform="translate(220 367) rotate(8)"><rect x="-26" y="-10" width="52" height="19"/><text y="4">a=4.000</text></g>
          <g transform="translate(590 393) rotate(-24)"><rect x="-29" y="-10" width="58" height="20"/><text y="4">L<tspan dy="3">1</tspan><tspan dy="-3">=6.000</tspan></text></g>
          <g transform="translate(458 453) rotate(-24)"><rect x="-29" y="-10" width="58" height="20"/><text y="4">L<tspan dy="3">2</tspan><tspan dy="-3">=4.000</tspan></text></g>
          <g transform="translate(352 501) rotate(-24)"><rect x="-29" y="-10" width="58" height="20"/><text y="4">L<tspan dy="3">3</tspan><tspan dy="-3">=4.000</tspan></text></g>
          <g transform="translate(578 455) rotate(-24)"><rect x="-21" y="-9" width="42" height="18"/><text y="4">14.000</text></g>
          <g transform="translate(774 281) rotate(-90)"><rect x="-30" y="-8" width="60" height="18"/><text y="5">H<tspan dy="3">1</tspan><tspan dy="-3">=3.000</tspan></text></g>
          <g transform="translate(1047 460) rotate(-24)"><rect x="-17" y="-9" width="34" height="18"/><text y="4">4.000</text></g>
          <g transform="translate(1153 412) rotate(-24)"><rect x="-17" y="-9" width="34" height="18"/><text y="4">4.000</text></g>
          <g transform="translate(1260 364) rotate(-24)"><rect x="-17" y="-9" width="34" height="18"/><text y="4">4.000</text></g>
        </g>

        <g class="axes" transform="translate(157 492)">
          <path d="M0 0L24 4" stroke="#a00000"/><path d="M34 5L21 0v8z" fill="#e00000"/>
          <path d="M0 0L-13 6" stroke="#00c000"/><path d="M-21 8l12-6v8z" fill="#00f000"/>
          <path d="M0 0V26" stroke="#0000b0"/><path d="M0 37l-3-13h6z" fill="#0000c0"/>
          <circle r="4" fill="#ffe000"/>
          <text x="39" y="12" fill="#e00000">X</text><text x="-29" y="16" fill="#00d000">Y</text><text x="-4" y="54" fill="#2020e0">Z</text>
        </g>
        <g class="axes" transform="translate(62 631)">
          <path d="M0 0L24 4" stroke="#a00000"/><path d="M34 5L21 0v8z" fill="#e00000"/>
          <path d="M0 0L-13 6" stroke="#00c000"/><path d="M-21 8l12-6v8z" fill="#00f000"/>
          <path d="M0 0V26" stroke="#0000b0"/><path d="M0 37l-3-13h6z" fill="#0000c0"/>
          <circle r="4" fill="#ffe000"/>
          <text x="-30" y="16" fill="#00d000">Y</text><text x="-5" y="53" fill="#2020e0">Z</text>
        </g>

        <g class="cube">
          <path d="M1257 179L1299 160 1373 171 1331 191z" fill="#b0b0b0"/>
          <path d="M1257 179L1331 191V272L1257 261z" fill="#dcdcdc"/>
          <path d="M1331 191L1373 171V253L1331 272z" fill="#c4c4c4"/>
          <path class="cube__grid" d="M1275 182V264M1312 188V269M1257 200L1331 211 1373 192M1257 241L1331 251 1373 233M1342 185V267M1362 176V257M1267 175L1342 185M1290 165L1362 176M1275 182L1317 163M1312 188L1353 168"/>
          <text x="1285" y="234" fill="#6fe07a" font-size="17" transform="rotate(6 1295 228)">-Y</text>
          <text x="1345" y="231" fill="#e07a7a" font-size="17" transform="rotate(-12 1352 226)">-X</text>
          <path class="cube__top" d="M1306 175l7 1M1316 175l9 1-7 2 9 1"/>
        </g>

        <g filter="url(#shadow)">
          <rect x="889.500" y="219.500" width="63" height="29" fill="#e6dff0" stroke="#9900ff" stroke-width="3"/>
          <path d="M959 251L984 265" stroke="#9900ff" stroke-width="3"/><path d="M991 269l-11 0 5-9z" fill="#9900ff"/>
        </g>
        <text class="callout" x="899" y="238">Block</text>
        <g filter="url(#shadow)"><use href="#pointer" x="622" y="383"/><use href="#pointer" x="1285" y="364"/></g>
        <text class="units" x="1393" y="683">Dimensions [m]</text>
      </svg>
    </main>

    <section class="dock">
      <header class="dock__title">
        <h2>Nodes</h2>
        <button aria-label="Float"><svg viewBox="0 0 12 12"><path d="M4 4V1h7v6H8M4 2h7M1 5h7v6H1zM1 6h7" fill="none" stroke="#333" stroke-width="1.500"/></svg></button>
        <button aria-label="Close"><svg viewBox="0 0 12 12"><path d="M2 2l8 8M10 2l-8 8" stroke="#333" stroke-width="2"/></svg></button>
      </header>
      <nav class="dock__menu"><button>Go To</button><button>Edit</button></nav>
      <div class="dock__tools">
        <div class="dock__source">
          <svg><use href="#i-table"/></svg>
          <select aria-label="Table group"><option>Structure</option></select>
        </div>
        <button class="tool" aria-label="Table view"><svg viewBox="0 0 24 24"><path d="M6 3h12v6H6zM8 15h3v6H8z" fill="#eee" stroke="#666" stroke-width="1.500"/></svg></button>
        <i class="sep"></i>
        <button class="tool" aria-label="All rows"><svg><use href="#i-rows"/></svg></button>
        <button class="tool" aria-label="Related rows"><svg><use href="#i-rows2"/></svg></button>
        <button class="tool" aria-label="Add"><svg><use href="#i-plus"/></svg></button>
        <button class="tool" aria-label="Multiply"><svg><use href="#i-times"/></svg></button>
        <button class="tool" aria-label="Divide"><svg><use href="#i-divide"/></svg></button>
        <i class="sep"></i>
        <button class="tool" aria-label="Clear table"><svg><use href="#i-clear"/></svg></button>
        <i class="sep"></i>
        <button class="tool" aria-label="Copy row"><svg><use href="#i-ins"/></svg></button>
        <button class="tool" aria-label="Delete row"><svg><use href="#i-del"/></svg></button>
        <button class="tool" aria-label="Insert row"><svg><use href="#i-left"/></svg></button>
        <button class="tool" aria-label="Remove row"><svg><use href="#i-right"/></svg></button>
        <i class="sep"></i>
        <button class="tool" aria-label="Split"><svg><use href="#i-split"/></svg></button>
        <i class="sep"></i>
        <button class="tool tool--marked" aria-label="Edit parameters">
          <svg><use href="#i-ab"/></svg>
          <svg class="marker-arrow" viewBox="0 0 36 62"><path d="M13 6a5 5 0 0 1 10 0l1 22h9L18 57 3 28h9z" fill="#5fa52a"/></svg>
        </button>
        <button class="tool" aria-label="Formula"><svg><use href="#i-fx"/></svg></button>
        <button class="tool" aria-label="Delete formula"><svg><use href="#i-fxx"/></svg></button>
        <button class="tool" aria-label="Show formulas"><svg><use href="#i-fxe"/></svg></button>
        <i class="sep"></i>
        <button class="tool" aria-label="Export"><svg><use href="#i-xls"/></svg></button>
        <i class="sep"></i>
        <button class="tool" aria-label="Settings"><svg><use href="#i-hand"/></svg></button>
        <button class="tool" aria-label="Coordinates"><svg><use href="#i-xyz"/></svg></button>
        <i class="sep"></i>
        <button class="more more--end" aria-label="More"><svg><use href="#i-more"/></svg></button>
      </div>

      <div class="dock__body">
        <table class="nodes">
          <colgroup><col class="c-no"><col class="c-type"><col class="c-num"><col class="c-num"><col class="c-num"><col class="c-opt"><col></colgroup>
          <thead>
            <tr class="strip"><td></td><td></td><td></td><td class="on"></td><td></td><td></td><td></td></tr>
            <tr><th class="no" rowspan="2">Node<br>No.</th><th rowspan="2"></th><th colspan="3" class="top">Coordinates</th><th class="top"></th><th class="top"></th></tr>
            <tr><th>X [m]</th><th>Y [m]</th><th>Z [m]</th><th>Options</th><th>Comment</th></tr>
          </thead>
          <tbody>
            <tr><th class="on">1</th><td><i class="type"></i></td><td>0.000</td><td class="f sel">-14.000</td><td class="f">-3.200</td><td></td><td></td></tr>
            <tr><th>2</th><td><i class="type"></i></td><td>2.000</td><td class="f">-14.000</td><td class="f">-3.000</td><td></td><td></td></tr>
            <tr><th>3</th><td><i class="type"></i></td><td>4.000</td><td class="f">-14.000</td><td class="f">-2.800</td><td></td><td></td></tr>
            <tr><th>4</th><td><i class="type"></i></td><td>2.000</td><td class="f">-14.000</td><td>0.000</td><td class="opt"><svg><use href="#i-pin"/></svg></td><td></td></tr>
            <tr><th>5</th><td><i class="type"></i></td><td>0.000</td><td class="f">-8.000</td><td class="f">-3.200</td><td></td><td></td></tr>
            <tr><th>6</th><td><i class="type"></i></td><td>2.000</td><td class="f">-8.000</td><td class="f">-3.000</td><td></td><td></td></tr>
            <tr><th>7</th><td><i class="type"></i></td><td>4.000</td><td class="f">-8.000</td><td class="f">-2.800</td><td></td><td></td></tr>
            <tr><th>8</th><td><i class="type"></i></td><td>2.000</td><td class="f">-8.000</td><td>0.000</td><td class="opt"><svg><use href="#i-pin"/></svg></td><td></td></tr>
          </tbody>
        </table>
        <div class="vscroll">
          <button aria-label="Scroll up"><svg class="flip"><use href="#i-chev"/></svg></button>
          <i></i>
          <button aria-label="Scroll down"><svg><use href="#i-chev"/></svg></button>
        </div>
      </div>

      <div class="tabs">
        <div class="tabs__nav">
          <button aria-label="First table"><svg viewBox="0 0 12 12"><path d="M1 2h2v8H1zM11 2v8L4 6z" fill="#444"/></svg></button>
          <button aria-label="Previous table"><svg viewBox="0 0 12 12"><path d="M9 2v8L3 6z" fill="#444"/></svg></button>
          <span>4 of 14</span>
        </div>
        <button>Solids</button><button>Line Sets</button><button>Member Sets</button><button>Surface Sets</button><button>Solid Sets</button><button>Formulas</button>
      </div>
    </section>

    <footer class="status">
      <div class="status__snap"><button>SNAP</button><button>GRID</button><button>LGRID</button><button>OSNAP</button></div>
      <span class="s-100"></span><span class="s-130"></span><span class="s-194">CS: Global XYZ</span><span class="s-80">Plane: XY</span><span class="s-94"></span><span class="s-94"></span><span class="s-94"></span><span></span>
      <i class="resize"></i>
    </footer>

    <section class="dialog" role="dialog" aria-labelledby="dialog-title">
      <header class="dialog__title">
        <svg class="logo"><use href="#i-app"/></svg>
        <h2 id="dialog-title">Edit Global Parameters</h2>
        <div class="window-buttons">
          <button aria-label="Minimize" disabled><svg viewBox="0 0 12 12"><path d="M0 5.500h12"/></svg></button>
          <button aria-label="Maximize"><svg viewBox="0 0 12 12"><path d="M.5.500h11v11H.5z"/></svg></button>
          <button aria-label="Close"><svg viewBox="0 0 12 12"><path d="M0 0l12 12M12 0L0 12"/></svg></button>
        </div>
      </header>
      <div class="dialog__body">
        <div class="panel">
          <h3>Global Parameters</h3>
          <table class="params">
            <colgroup><col class="p-no"><col class="p-name"><col class="p-sym"><col class="p-unit"><col class="p-type"><col class="p-val"><col></colgroup>
            <thead>
              <tr class="strip"><td></td><td></td><td></td><td></td><td></td><td></td><td></td></tr>
              <tr><th class="no">No.</th><th>Name</th><th>Symbol<br>(HTML)</th><th>Unit Group</th><th>Definition<br>Type</th><th>Value</th><th class="cut">Unit</th></tr>
            </thead>
            <tbody>
              <tr><th>1</th><td class="focus">a</td><td>a</td><td>Lengths</td><td>Value</td><td>4.000</td><td>m</td></tr>
              <tr><th>2</th><td>H_1</td><td>H<small>1</small></td><td>Lengths</td><td>Value</td><td>3.000</td><td>m</td></tr>
              <tr><th>3</th><td>H_2</td><td>H<small>2</small></td><td>Lengths</td><td>Value</td><td>0.200</td><td>m</td></tr>
              <tr><th>4</th><td>L_1_new</td><td>L<small>1,new</small></td><td>Lengths</td><td>Value</td><td><mark>6.000</mark></td><td>m</td></tr>
              <tr><th>5</th><td>L_2</td><td>L<small>2</small></td><td>Lengths</td><td>Value</td><td>4.000</td><td>m</td></tr>
              <tr><th>6</th><td>L_3</td><td>L<small>3</small></td><td>Lengths</td><td>Value</td><td>4.000</td><td>m</td></tr>
              <tr class="last"><th>7</th><td></td><td></td><td></td><td></td><td></td><td></td></tr>
            </tbody>
          </table>
          <div class="hscroll">
            <button aria-label="Scroll left"><svg class="turn-l"><use href="#i-chev"/></svg></button>
            <i></i>
            <button aria-label="Scroll right"><svg class="turn-r"><use href="#i-chev"/></svg></button>
          </div>
          <div class="panel__tools">
            <button class="key" aria-label="Copy row"><svg><use href="#i-ins"/></svg></button>
            <button class="key" aria-label="Delete row"><svg><use href="#i-del"/></svg></button>
            <button class="key" aria-label="Insert row"><svg><use href="#i-left"/></svg></button>
            <button class="key" aria-label="Remove row"><svg><use href="#i-right"/></svg></button>
            <button class="key" aria-label="Delete unused"><svg><use href="#i-sortx"/></svg></button>
            <button class="key key--push" aria-label="Export"><svg><use href="#i-xls"/></svg></button>
            <button class="key key--off" aria-label="Import" disabled><svg><use href="#i-xls2"/></svg></button>
          </div>
        </div>
        <div class="panel">
          <h3><label for="comment">Comment</label></h3>
          <div class="panel__comment">
            <div class="combo combo--wide">
              <select id="comment"><option></option></select>
              <svg class="chev"><use href="#i-chev"/></svg>
            </div>
            <button class="key key--off" aria-label="Comment library" disabled><svg><use href="#i-stack"/></svg></button>
          </div>
        </div>
      </div>
      <footer class="dialog__footer">
        <button class="key" aria-label="Help"><svg><use href="#i-help"/></svg></button>
        <button class="key key--gap" aria-label="Units"><svg><use href="#i-units"/></svg></button>
        <button class="btn btn--ok">OK</button>
        <button class="btn">Cancel</button>
        <button class="btn" disabled>Apply</button>
        <i class="resize"></i>
      </footer>
    </section>
  </div>
  <script src="scene.js"></script>
</body>
</html>
```
FILE: styles.css
```
* {
  box-sizing: border-box;
}

body {
  margin: 0;
  font-family: "Noto Sans", "Open Sans", sans-serif;
  font-size: 12px;
  line-height: 16px;
  color: #000;
}

h1, h2, h3 {
  margin: 0;
}

button, select {
  margin: 0;
  padding: 0;
  border: 0;
  border-radius: 0;
  background: none;
  color: inherit;
  font: inherit;
}

select {
  appearance: none;
  min-width: 0;
}

svg {
  display: block;
}

.icon-set {
  display: none;
}

.gradients {
  position: absolute;
  width: 0;
  height: 0;
}

.app {
  position: relative;
  display: flex;
  flex-direction: column;
  height: 100vh;
  border: 1px solid #7a7a7a;
  background: #f7f7f7;
  overflow: hidden;
}

/* title bar */
.titlebar {
  display: flex;
  align-items: center;
  flex: 0 0 37px;
  padding-left: 8px;
  background: #fff;
}

.logo {
  width: 20px;
  height: 20px;
}

.titlebar h1 {
  margin-left: 6px;
  font-size: 14px;
  font-weight: 400;
}

.window-buttons {
  display: flex;
  margin-left: auto;
}

.window-buttons button {
  display: flex;
  align-items: center;
  justify-content: center;
  width: 59px;
  height: 36px;
}

.window-buttons svg {
  width: 12px;
  height: 12px;
  fill: none;
  stroke: #000;
}

.window-buttons button:disabled svg {
  stroke: #bbb;
}

/* menus */
.menubar {
  display: flex;
  align-items: center;
  gap: 1px;
  flex: 0 0 24px;
  padding-top: 1px;
}

.doc-icon {
  width: 20px;
  height: 20px;
}

.menubar button {
  padding: 0 8px;
}

/* toolbars */
.toolbar {
  display: flex;
  flex: 0 0 35px;
  border-top: 1px solid #dedede;
}

.group {
  display: flex;
  align-items: center;
  flex: none;
}

.group + .group {
  border-left: 1px solid #d5d5d5;
}

.group:last-child {
  flex: 1;
}

.group:last-child .more {
  margin-left: auto;
}

.grip {
  flex: 0 0 3px;
  height: 26px;
  margin: 0 5px 0 4px;
  border-left: 2px dotted #b5b5b5;
}

.group:first-child .grip {
  margin-right: 4px;
}

.sep {
  flex: 0 0 8px;
  height: 26px;
  background: linear-gradient(#d0d0d0, #d0d0d0) 3px 0 / 1px 100% no-repeat;
}

.tool {
  display: flex;
  align-items: center;
  justify-content: center;
  flex: 0 0 31px;
  height: 28px;
}

.tool svg {
  width: 24px;
  height: 24px;
}

.tool--active {
  background: #cde4f7;
  box-shadow: inset 0 0 0 1px #90c8f6;
}

.caret {
  flex: 0 0 15px;
  height: 24px;
}

.caret::before {
  content: "";
  display: block;
  width: 0;
  margin: auto;
  border: 5px solid transparent;
  border-top-color: #000;
  border-bottom: 0;
}

.caret--off::before {
  border-top-color: #888;
}

.more {
  display: flex;
  align-items: center;
  justify-content: center;
  flex: 0 0 18px;
  height: 24px;
}

.more svg,
.chev {
  width: 12px;
  height: 12px;
}

.combo {
  display: flex;
  align-items: center;
  flex: 0 0 151px;
  height: 24px;
  padding: 0 4px;
  background: #e8e8f3;
}

.combo select {
  flex: 1;
  align-self: stretch;
}

.combo__lc {
  margin: 0 20px 0 6px;
  border-right: 1px solid #fff;
}

.combo__cs {
  margin-left: 4px;
}

.swatch {
  width: 14px;
  height: 14px;
  margin-right: 4px;
  background: #ccffff;
}

.badge {
  width: 38px;
  height: 16px;
  background: #000;
  color: #fff;
  font-weight: 400;
  text-align: center;
}

.step {
  flex: 0 0 20px;
  height: 24px;
  background: #e8e8f3;
  font-family: "DejaVu Sans", sans-serif;
  font-size: 12px;
}

.step--off {
  background: #d0d0d0;
  color: #555;
}

/* 3D view */
.view {
  flex: 1 1 0;
  min-height: 0;
  background: #fafafa;
}

.scene {
  width: 100%;
  height: 100%;
}

.grid-line {
  stroke: #c9c9c9;
}

.beam {
  fill: #828f8d;
}

.beam--long {
  fill: #87938f;
}

.beam-top {
  stroke: #58625f;
  stroke-width: 2;
}

.beam-top--long {
  stroke-width: 3;
}

.column-edge {
  stroke: #4e5956;
  stroke-width: 1;
}

.foot {
  fill: none;
  stroke: #2ecc2e;
  stroke-width: 2;
}

.node {
  fill: #fff;
  stroke: #009696;
  stroke-width: 2;
}

.tip {
  stroke: #c42020;
}

.dim-lines path {
  fill: none;
  stroke: #008080;
}

.dim-lines .dim-arrow {
  marker-start: url(#arrow);
  marker-end: url(#arrow);
}

.dim-lines .dim-down {
  marker-end: url(#arrow);
}

.dim-lines .dim-pale {
  stroke: #a5c4c1;
  stroke-width: 2;
}

.dim-text rect {
  fill: #fff;
}

.dim-text text {
  fill: #009c9c;
  font-size: 13px;
  text-anchor: middle;
}

.axes path {
  stroke-width: 3;
}

.axes text {
  font-size: 13px;
}

.cube path {
  stroke: #222;
}

.cube .cube__grid {
  fill: none;
  stroke-width: 2;
}

.cube .cube__top {
  fill: none;
  stroke: #8a8ad0;
  stroke-width: 2;
}

.cube text {
  font-weight: 700;
}

.callout {
  fill: #9900ff;
  font: bold 15px "Liberation Sans", sans-serif;
}

.units {
  font-size: 14px;
  text-anchor: end;
}

/* nodes table */
.dock {
  display: flex;
  flex-direction: column;
  flex: none;
}

.dock__title {
  display: flex;
  align-items: center;
  height: 24px;
  padding: 0 8px 0 7px;
  background: #d8e5f2;
}

.dock__title h2 {
  margin-right: auto;
  font-size: 14px;
  color: #333;
}

.dock__title button {
  margin-left: 14px;
}

.dock__title svg {
  width: 12px;
  height: 12px;
}

.dock__menu {
  display: flex;
  align-items: center;
  gap: 18px;
  height: 24px;
  padding: 2px 0 0 8px;
}

.dock__tools {
  display: flex;
  align-items: center;
  height: 35px;
  border-top: 1px solid #dedede;
}

.dock__source {
  display: flex;
  align-items: center;
  gap: 6px;
  flex: 0 0 711px;
  height: 24px;
  margin-left: 2px;
  padding-left: 4px;
  background: #e8e8f3;
}

.dock__source svg {
  width: 20px;
  height: 20px;
}

.tool--marked {
  position: relative;
}

.tool--marked::after {
  content: "";
  position: absolute;
  inset: -5px -4px;
  border: 3px solid #82cf35;
}

.tool .marker-arrow {
  position: absolute;
  left: -3px;
  bottom: 27px;
  z-index: 1;
  width: 36px;
  height: 62px;
  filter: drop-shadow(1px 2px 1px rgba(0, 0, 0, .4));
}

.more--end {
  margin-left: auto;
}

.dock__body {
  display: flex;
  border-top: 1px solid #b9b9b9;
  background: #fff;
}

table {
  width: 100%;
  border-spacing: 0;
  table-layout: fixed;
}

.nodes {
  flex: 1;
  width: auto;
}

.c-no {
  width: 77px;
}

.c-type {
  width: 598px;
}

.c-num {
  width: 113px;
}

.c-opt {
  width: 106px;
}

td, th {
  height: 20px;
  padding: 0 4px;
  border-right: 1px solid #dadada;
  border-bottom: 1px solid #dadada;
  font-weight: 400;
  overflow: hidden;
}

.strip td {
  height: 13px;
  padding: 0;
  border-color: #f7f7f7;
  background: #e0e0e0;
}

.strip .on,
tbody .on {
  background: #c6c6c6;
}

thead th {
  background: #efefef;
  border-color: #d0d0d0;
}

thead .top {
  border-bottom-color: #efefef;
}

thead .no,
tbody th {
  background: #e0e0e0;
}

tbody th {
  border-color: #f7f7f7;
}

.nodes tbody td {
  text-align: right;
  background: #fff;
}

.type {
  display: block;
  width: 14px;
  height: 14px;
  background: #ff5a00;
}

.nodes .f {
  background: linear-gradient(135deg, #fff000 4px, transparent 4px) #fff;
}

.nodes .sel {
  background: linear-gradient(135deg, #fff000 4px, transparent 4px) #0078d7;
  color: #fff;
  outline: 1px dotted #ff9a3c;
  outline-offset: -1px;
}

.opt svg {
  width: 14px;
  height: 14px;
}

.vscroll {
  display: flex;
  flex-direction: column;
  align-items: center;
  width: 21px;
  background: #f0f0f0;
}

.vscroll button {
  height: 21px;
}

.vscroll svg,
.hscroll svg {
  width: 14px;
  height: 14px;
}

.vscroll i {
  width: 19px;
  height: 26px;
  margin-bottom: auto;
  background: #cdcdcd;
}

.flip {
  transform: rotate(180deg);
}

.turn-l {
  transform: rotate(90deg);
}

.turn-r {
  transform: rotate(-90deg);
}

.tabs {
  display: flex;
  height: 25px;
  border-top: 1px solid #c3c3ce;
}

.tabs__nav {
  display: flex;
  align-items: center;
  gap: 10px;
  flex: 0 0 712px;
  padding-left: 5px;
}

.tabs__nav span {
  margin-left: 6px;
}

.tabs__nav svg {
  width: 12px;
  height: 12px;
}

.tabs > button {
  padding: 0 8px;
  border-right: 2px solid #c9c9d6;
  border-bottom: 1px solid #c3c3ce;
  background: #efefef;
}

/* status bar */
.status {
  position: relative;
  display: flex;
  flex: 0 0 29px;
  padding: 4px 0 2px;
}

.status__snap {
  display: flex;
  gap: 1px;
  margin-left: 404px;
}

.status__snap button {
  padding: 2px 5px 0;
  border: 1px solid #c9c9c9;
  border-width: 1px 1px 0;
  background: #efefef;
}

.status span {
  padding: 5px 4px 0;
  border-left: 1px solid #d0d0d0;
}

.s-100 {
  width: 100px;
}

.s-130 {
  width: 131px;
}

.s-194 {
  width: 194px;
}

.s-80 {
  width: 81px;
}

.s-94 {
  width: 94px;
}

.resize {
  position: absolute;
  right: 1px;
  bottom: 1px;
  width: 12px;
  height: 12px;
  background: repeating-conic-gradient(#aaa 0 25%, transparent 0 100%) 0 0 / 4px 4px;
  clip-path: polygon(100% 0, 100% 100%, 0 100%);
}

/* parameter dialog */
.dialog {
  position: absolute;
  left: 93px;
  top: 541px;
  width: 634px;
  border: 3px solid #82cf35;
  background: #fff;
}

.dialog__title {
  display: flex;
  align-items: center;
  height: 37px;
  padding-left: 6px;
}

.dialog__title h2 {
  margin-left: 5px;
  font-size: 14px;
  font-weight: 400;
}

.dialog__title .window-buttons {
  margin-right: -7px;
}

.dialog__body {
  display: flex;
  flex-direction: column;
  gap: 14px;
  padding: 11px 3px 10px 8px;
  background: #d0d0d6;
}

.panel {
  background: #fff;
}

.panel h3 {
  padding: 4px 6px 3px;
  font-size: 12px;
  color: #5b6f99;
}

.p-no {
  width: 50px;
}

.p-name {
  width: 100px;
}

.p-sym {
  width: 96px;
}

.p-unit {
  width: 91px;
}

.p-type {
  width: 75px;
}

.p-val {
  width: 114px;
}

.params thead th {
  height: 40px;
  padding-bottom: 1px;
  vertical-align: bottom;
  line-height: 17px;
}

.params .cut {
  padding-left: 12px;
}

.params .focus {
  outline: 1px dotted #000;
  outline-offset: -1px;
}

.params td:nth-child(6) {
  text-align: right;
}

.params tbody td:nth-child(7) {
  background: #f8f8f2;
}

.params small {
  font-size: 12px;
  vertical-align: -1px;
  line-height: 1;
}

.params mark {
  display: inline-block;
  height: 19px;
  margin: 0 -4px;
  padding: 1px 4px 0 12px;
  vertical-align: top;
  background: #ffff55;
}

.params .last > * {
  height: 18px;
  border-bottom: 0;
}

.hscroll {
  display: flex;
  align-items: center;
  height: 19px;
  margin-top: 12px;
  background: #f0f0f0;
}

.hscroll i {
  flex: 0 0 423px;
  height: 19px;
  margin-right: auto;
  background: #cbcbcb;
}

.hscroll button {
  padding: 0 3px;
}

.panel__tools {
  display: flex;
  gap: 4px;
  padding: 20px 6px 5px;
}

.key {
  display: flex;
  align-items: center;
  justify-content: center;
  width: 29px;
  height: 24px;
  background: #cde4f7;
}

.key svg {
  width: 20px;
  height: 20px;
}

.key--off {
  background: #e5e5e5;
}

.key--push {
  margin-left: auto;
}

.panel__comment {
  display: flex;
  gap: 6px;
  padding: 5px 6px;
}

.combo--wide {
  flex: 1;
}

.dialog__footer {
  position: relative;
  display: flex;
  align-items: flex-start;
  gap: 12px;
  height: 51px;
  padding: 12px 10px 0 8px;
}

.key--gap {
  margin-right: auto;
}

.btn {
  width: 101px;
  height: 26px;
  margin-top: 1px;
  padding-top: 2px;
  border: 1px solid #adadad;
  background: #e1e1e1;
}

.btn--ok {
  border-color: #0a64ad;
  background: #cce4f7;
}

.btn:disabled {
  border-color: #bfbfbf;
  background: #cccccc;
  color: #838383;
}
```
FILE: scene.js
```
// axonometric projection, metres to view units
function project(x, y, z) {
  return [
    157 + 46.3 * x + 26.7 * y,
    492 + 6.95 * x - 12 * y - 52 * z
  ];
}

const ground = document.getElementById('ground');
const frames = document.getElementById('frames');
const nodes = document.getElementById('nodes');

function add(parent, tag, cls, attrs) {
  const el = document.createElementNS('http://www.w3.org/2000/svg', tag);
  if (cls) el.setAttribute('class', cls);
  for (const key in attrs) el.setAttribute(key, attrs[key]);
  parent.appendChild(el);
}

function line(parent, cls, a, b) {
  add(parent, 'line', cls, { x1: a[0], y1: a[1], x2: b[0], y2: b[1] });
}

// work plane: a line every 10 m, a dot every metre
for (let i = -30; i <= 60; i += 10) {
  line(ground, 'grid-line', project(i, -40, 0), project(i, 30, 0));
}
for (let j = -40; j <= 30; j += 10) {
  line(ground, 'grid-line', project(-40, j, 0), project(60, j, 0));
}
let dots = '';
for (let i = -30; i <= 40; i++) {
  for (let j = -30; j <= 30; j++) {
    const p = project(i, j, 0);
    if (p[0] > 0 && p[0] < 1400 && p[1] > 130 && p[1] < 700) {
      dots += 'M' + Math.round(p[0]) + ' ' + Math.round(p[1]) + 'h1v1h-1z';
    }
  }
}
add(ground, 'path', '', { d: dots });

function beam(a, b, kind) {
  add(frames, 'path', 'beam' + (kind ? ' beam--' + kind : ''), {
    d: 'M' + a[0] + ' ' + (a[1] - 6) + 'L' + b[0] + ' ' + (b[1] - 6) + 'v12L' + a[0] + ' ' + (a[1] + 6) + 'z'
  });
  line(frames, 'beam-top' + (kind ? ' beam-top--' + kind : ''), [a[0], a[1] - 5], [b[0], b[1] - 5]);
}

function column(x, y) {
  const p = project(x, y, 0);
  const top = project(x, y, 3);
  add(frames, 'path', 'foot', { d: 'M' + (p[0] - 9) + ' ' + p[1] + 'l14 2 4-2' });
  add(frames, 'rect', 'beam', { x: p[0] - 7, y: top[1], width: 14, height: p[1] - top[1] });
  line(frames, 'column-edge', [p[0] + 4, top[1]], [p[0] + 4, p[1]]);
}

// roof falls from 3.2 m to 2.8 m over the 4 m width
function frame(x, bays) {
  const end = bays[bays.length - 1];
  const at = (dx, y) => project(x + dx, y, 3.2 - dx / 10);

  beam(at(0, 0), at(0, end), 'long');
  bays.slice().reverse().forEach(y => {
    if (y > 0) beam(at(0, y), at(4, y));
    column(x + 2, y);
  });
  beam(at(2, 0), at(2, end), 'long');
  beam(at(4, 0), at(4, end), 'long');
  beam(at(0, 0), at(4, 0));

  const left = at(0, 0);
  const right = at(4, 0);
  line(frames, 'tip', [left[0], left[1] - 6], [left[0], left[1] + 6]);
  line(frames, 'tip', [right[0], right[1] - 6], [right[0], right[1] + 6]);
}

frame(0, [0, 4, 8, 14]);
frame(12, [0, 4, 8, 12]);

// hinge marks on the first frame
[0.1, 3.9, 4.1, 7.9, 8.1, 13.9].forEach(y => {
  [0, 2, 4].forEach(x => {
    const p = project(x, y, 3.2 - x / 10);
    add(nodes, 'circle', 'node', { cx: p[0], cy: p[1], r: 3 });
  });
});
```
